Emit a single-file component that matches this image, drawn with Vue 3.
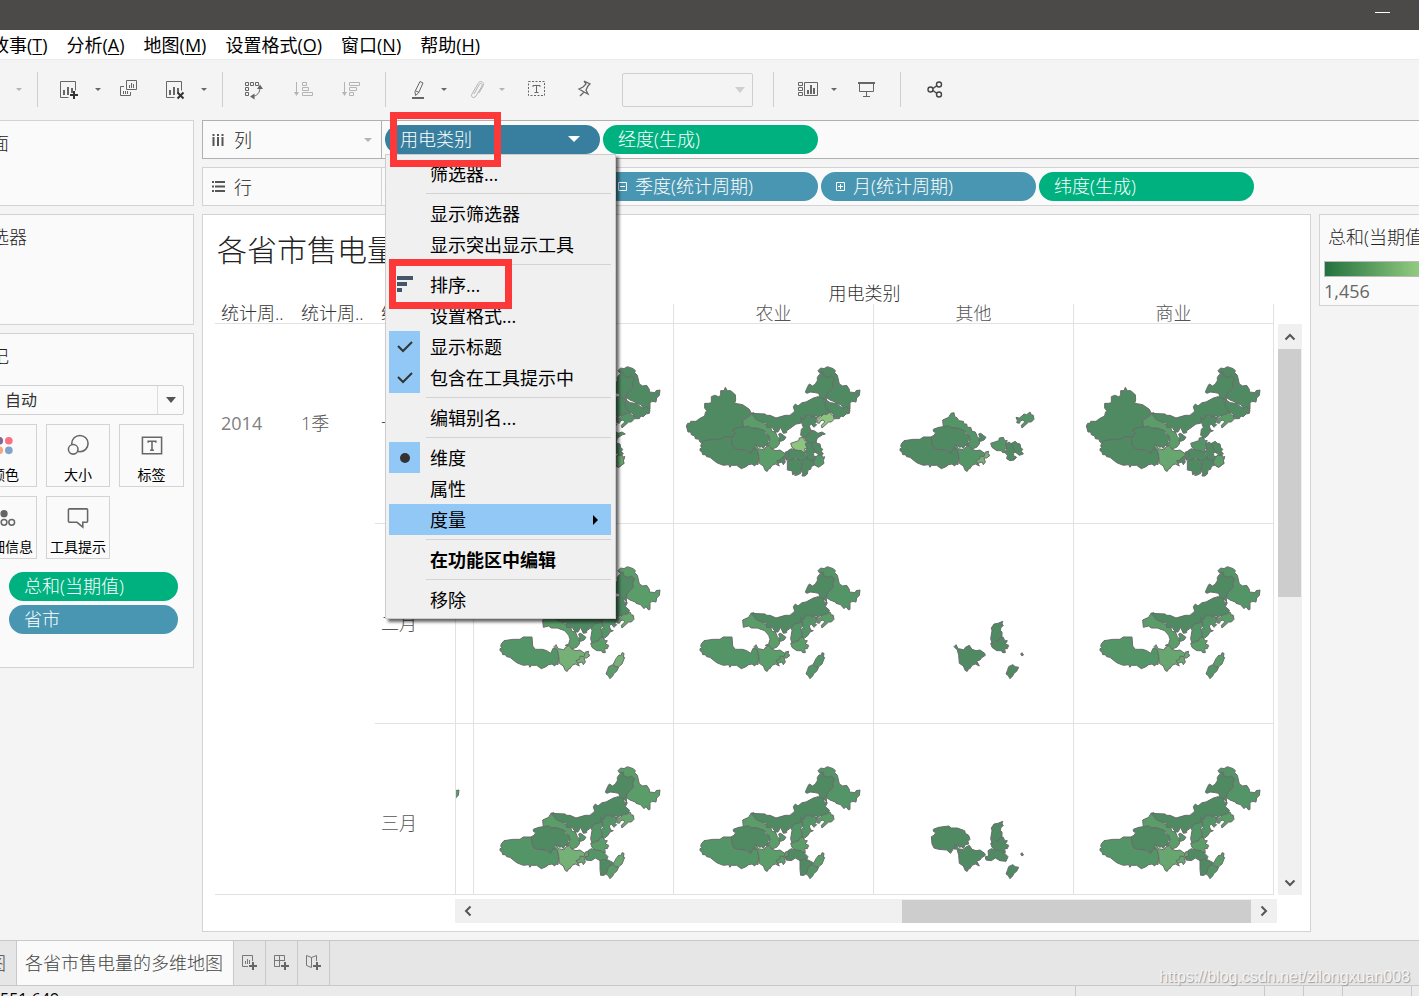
<script setup>
const menus = [
  ['故事', 'T'], ['分析', 'A'], ['地图', 'M'], ['设置格式', 'O'], ['窗口', 'N'], ['帮助', 'H'],
]

const chartBox = '<path d="M10.5 18.5H2.5V2.5h15v9"/><path class="f" d="M5 11h2v5H5zM9 8h2v8H9zM13 9h2v5h-2z"/>'
const icons = {
  add: chartBox + '<path class="k" d="M15 12h2v3h3v2h-3v3h-2v-3h-3v-2h3z"/>',
  dup: '<path d="M8.5 1.5h10v9h-10zM6 7.500H2.500v9h10V13"/><path d="M11.500 6v3M13.500 4v5M15.500 5v4M5.500 12v3M7.500 12v3M9.500 12v3"/>',
  clear: chartBox + '<path class="x" d="M13.500 13.500l6 6M19.500 13.500l-6 6"/>',
  swap: '<path d="M2.500 3.500h3v3h-3zM7.500 3.500h3v3h-3zM12.500 3.500h3v3h-3zM2.500 8.500h3v3h-3zM2.500 13.500h3v3h-3z"/><path d="M17 8c0 6-3 9-8 9.500" /><path class="f" d="M17 5.500l3 4.500h-6zM7 17.500l4.500-3v6z"/>',
  asc: '<path d="M3.500 3v13M9.500 3.500h4v3h-4zM9.500 8.500h6v3h-6zM9.500 13.500h10v3h-10z"/><path class="f" d="M1 13h5l-2.500 4z"/>',
  desc: '<path d="M3.500 3v13M8.500 3.500h10v3h-10zM8.500 8.500h7v3h-7zM8.500 13.500h4v3h-4z"/><path class="f" d="M1 13h5l-2.500 4z"/>',
  pen: '<path d="M12 2.500l3 1.500-4.500 10-3 2.500-.500-4zM8 12l3 1.500"/><path class="f" d="M4 18h12v2H4z"/>',
  clip: '<path d="M8 15l5-9c1-2.500 4-1.500 3 1l-6 10c-2 3-6 1-4-2l6-10.500c2.500-4 7-1 5 2.500l-4 7"/>',
  text: '<path stroke-dasharray="2 1.500" d="M2.500 2.500h16v14h-16z"/><path d="M7 8V6.500h7V8M10.500 7v6.500M8.500 13.500h4"/>',
  pin: '<path d="M10 2l6 3-2 2-2 4 2 4-4-2-4 4M10 13l-5-3 4-2 3-3-2-3" stroke-width="1.300"/>',
  show: '<path d="M.500 3.500h4v3h-4zM.500 8.500h4v3h-4zM.500 13.500h4v3h-4zM6.500 3.500h13v13h-13z"/><path class="f" d="M9 11h2v4H9zM12 6h2v9h-2zM15 9h2v6h-2z"/>',
  present: '<path class="f" d="M2 3h17v2H2z"/><path d="M3.500 5v7.500h14V5M10.500 12.500v5M7 17.500h7"/>',
  share: '<g stroke-width="1.400"><circle cx="5.500" cy="10.500" r="2.500"/><circle cx="14" cy="5.500" r="2.500"/><circle cx="14" cy="15.500" r="2.500"/><path d="M8 9.500l4-3M8 11.500l4 3"/></g>',
}

const tools = [
  { t: 'arrow', g: 10, dim: true, l: '更多' }, { t: 'sep', g: 10 },
  { t: 'icon', i: 'add', g: 18, l: '新建工作表' }, { t: 'arrow', g: 10, l: '新建选项' },
  { t: 'icon', i: 'dup', g: 10, l: '复制' }, { t: 'icon', i: 'clear', g: 22, l: '清除' }, { t: 'arrow', g: 10, l: '清除选项' },
  { t: 'sep', g: 10 }, { t: 'icon', i: 'swap', g: 18, l: '交换行和列' },
  { t: 'icon', i: 'asc', g: 26, dim: true, l: '升序' }, { t: 'icon', i: 'desc', g: 24, dim: true, l: '降序' },
  { t: 'sep', g: 22 }, { t: 'icon', i: 'pen', g: 20, l: '突出显示' }, { t: 'arrow', g: 6, l: '突出显示选项' },
  { t: 'icon', i: 'clip', g: 12, dim: true, l: '分组' }, { t: 'arrow', g: 6, dim: true, l: '分组选项' },
  { t: 'icon', i: 'text', g: 14, l: '标签' }, { t: 'icon', i: 'pin', g: 24, l: '固定' },
  { t: 'select', g: 26, l: '适合' }, { t: 'sep', g: 20 },
  { t: 'icon', i: 'show', g: 22, l: '卡' }, { t: 'arrow', g: 6, l: '卡选项' },
  { t: 'icon', i: 'present', g: 12, l: '演示模式' }, { t: 'sep', g: 22 },
  { t: 'icon', i: 'share', g: 22, dark: true, l: '共享' },
]

const ctx = [
  { n: '筛选器...' }, null, { n: '显示筛选器' }, { n: '显示突出显示工具' }, null,
  { n: '排序...', icon: 'sort', boxed: true }, { n: '设置格式...' },
  { n: '显示标题', icon: 'check' }, { n: '包含在工具提示中', icon: 'check' }, null,
  { n: '编辑别名...' }, null, { n: '维度', icon: 'dot' }, { n: '属性' },
  { n: '度量', hot: true }, null, { n: '在功能区中编辑', bold: true }, null, { n: '移除' },
]

const P = {
  xj: '49,258 53,250 60,250 62,244 78,244 88,236 104,228 106,218 110,212 104,204 104,190 116,190 124,188 124,170 134,166 146,170 152,166 152,152 162,152 166,142 172,152 182,152 196,164 197,180 194,190 218,194 238,208 243,218 238,228 224,236 222,260 190,268 190,274 197,278 192,288 184,290 160,293 145,300 130,298 102,304 96,310 88,304 88,298 76,296 74,288 64,284 62,276 54,276',
  xz: '94,312 102,302 130,298 150,298 160,291 186,291 188,318 196,328 218,328 230,332 242,340 250,324 262,328 266,350 264,374 258,372 254,378 246,372 236,374 228,380 214,386 200,376 184,376 180,382 176,374 160,376 140,368 120,352 110,350 106,344 98,344 96,336 90,332 90,326 96,324 92,318',
  qh: '190,268 206,262 236,258 244,264 262,264 284,272 286,280 296,286 300,298 294,304 296,312 286,314 280,326 276,320 268,322 256,314 256,328 250,326 242,340 230,330 206,328 192,324 186,312 184,290 192,286 197,278 190,274',
  gs: '218,240 236,232 243,220 252,218 254,230 262,234 266,242 280,244 282,252 290,252 292,262 302,262 306,274 316,276 322,290 330,298 328,312 320,322 308,326 306,332 298,318 286,316 296,312 300,298 296,286 284,272 262,264 244,264 236,258 220,262',
  nm: '243,220 286,222 290,226 300,226 318,234 346,226 360,226 374,214 370,200 376,192 384,198 396,188 408,186 430,174 444,170 462,174 462,186 472,188 466,200 478,210 476,220 444,230 434,226 426,232 424,224 416,228 408,226 402,240 396,236 392,250 378,252 362,264 350,272 350,278 340,280 332,262 324,276 316,276 306,262 290,262 290,250 276,246 260,240 252,230',
  nme: '406,156 414,138 418,132 428,138 436,132 442,122 442,112 448,104 456,94 464,108 474,112 484,108 492,114 494,122 488,132 490,142 474,158 468,170 470,186 462,176 450,172 446,160 436,158 422,156 410,160',
  hlj: '444,92 452,84 462,86 472,80 490,86 496,92 494,98 502,106 508,132 518,138 530,136 538,148 538,156 556,158 558,152 570,150 568,166 560,174 558,186 546,184 540,190 540,208 536,210 528,200 522,206 512,194 498,190 496,186 480,180 468,172 474,158 490,142 488,130 494,116 484,108 474,112 462,108 460,96 448,98',
  jl: '464,178 472,182 480,188 498,190 512,200 522,206 528,200 540,210 538,220 528,222 520,230 512,228 508,236 494,236 490,222 476,214 466,200',
  ln: '438,232 448,234 456,228 462,222 470,224 480,216 484,224 490,226 492,238 484,246 476,246 456,264 454,256 464,246 460,240 452,242 448,250 440,248 442,242',
  hb: '392,232 400,240 408,226 416,230 424,226 426,232 434,226 440,242 434,252 440,254 432,262 424,252 418,258 422,270 430,272 420,276 414,286 404,294 392,286 394,268 400,262 396,252',
  sd: '404,294 414,284 422,276 432,272 444,280 456,276 466,282 458,284 442,294 438,306 428,312 410,306',
  sx: '362,296 366,272 364,264 372,252 384,250 398,244 396,252 400,256 392,264 392,272 396,276 396,296 388,302 374,304 366,310',
  hn: '362,310 374,306 386,302 388,294 400,292 404,302 412,302 406,312 416,316 412,326 404,326 406,338 398,338 394,332 380,332 366,322',
  hbei: '346,350 356,348 354,332 364,326 376,330 392,332 402,338 414,350 408,364 390,362 376,354 364,362 348,360',
  ah: '406,312 418,306 424,312 430,312 428,322 438,336 430,340 430,346 440,352 432,360 420,362 410,356 412,346 404,336 412,326',
  js: '424,310 436,304 442,310 450,312 452,322 458,328 454,334 460,342 448,346 438,338 428,322',
  zj: '434,356 442,346 456,346 460,352 464,350 460,362 462,370 446,382 432,374 430,366',
  jx: '396,362 412,356 424,362 434,360 430,370 434,374 424,380 422,388 414,390 412,402 404,408 396,408 398,400 392,388',
  hun: '352,364 370,356 390,360 396,370 392,400 380,406 374,406 376,400 368,404 366,392 352,390',
  cq: '318,362 330,356 330,348 342,350 346,336 356,334 354,342 360,346 350,354 342,354 346,366 340,374 336,366 324,370',
  sc: '252,320 258,314 264,326 276,328 282,330 286,322 298,316 306,328 318,332 330,330 344,340 346,346 334,354 330,360 320,362 324,370 328,378 316,372 306,376 300,386 296,386 292,394 286,392 280,378 268,370 266,346 262,330',
  nx: '326,282 332,280 340,286 348,292 342,300 332,304 326,302 330,294',
  fj: '430,372 438,356 446,346 454,346 456,338 462,340 460,352 464,352 456,372 444,382 434,378',
  gd: '408,402 412,392 416,380 428,374 436,380 446,382 440,394 432,400 428,408 420,416 414,406',
  gx: '390,362 400,358 414,360 430,368 424,378 414,384 410,400 402,406 392,406 390,388',
  tip: '452,342 456,338 458,342 461,344 456,348',
}
const C = ['#4f8a63', '#549567', '#5a9d69', '#67a66f', '#75b076', '#8cc480']
const full = 'xj0 xz0 qh0 gs2 nm0 nme0 hlj0 jl0 '
const south = 'hb0 hn1 hbei0 ah0 js0 zj1 jx0 hun0 cq0 nx0 '
const north = 'xz1 gs2 nm0 nme0 hb1 nx1 sx1 hn2 '
const parse = (s) => s.trim().split(/\s+/).map((k) => {
  const [, id, c] = k.match(/^([a-z]+)(\d)$/)
  return { pts: P[id], fill: C[c] }
})
const rows = [
  { y: '2014', q: '1季', m: '一月', cells: [
    full + south + 'sd1 ln1 sc3 zj3', full + south + 'sd1 ln1 sc3 zj3',
    full + 'hb0 sd0 ln5 hn5 hbei0 ah0 js0 zj1 jx0 hun0 cq0 nx0 sc2',
    'xz0 gs1 qh0 sc1 cq4 nx0 ln1 hn1 ah0 js0',
    full + south + 'ln2 sc3 zj2',
  ] },
  { y: '', q: '', m: '二月', cells: [
    north + 'hlj2 ln3 sc4 cq4 fj4 gd2', north + 'hlj2 ln3 sc4 cq4 fj4 gd2',
    north + 'hlj1 ln2 sc2 cq2 fj1 gd1', 'sc0 sx0 hn0 gd0 tip0',
    north + 'hlj1 ln2 sc3 cq3 fj2 gd1',
  ] },
  { y: '', q: '', m: '三月', cells: [
    north + 'qh1 hlj2 ln3 sc4 cq4 hbei1 gx0 fj3 gd2', north + 'qh0 hlj2 ln3 sc4 cq3 hbei1 gx0 fj3 gd2',
    north + 'qh0 hlj1 ln2 sc2 cq2 hbei0 gx0 fj2 gd1', 'qh0 sc0 sx0 hn0 hbei0 gd0 tip0',
    north + 'qh0 hlj1 ln2 sc3 cq3 hbei0 gx0 fj2 gd1',
  ] },
].map((r) => ({ ...r, cells: r.cells.map(parse) }))
</script>

<template>
  <div class="app">
    <header class="titlebar"><button class="min" aria-label="最小化"></button></header>
    <nav class="menubar">
      <a v-for="m in menus" :key="m[1]" href="#">{{ m[0] }}(<u>{{ m[1] }}</u>)</a>
    </nav>
    <div class="toolbar">
      <template v-for="(t, k) in tools" :key="k">
        <span v-if="t.t === 'sep'" class="sep" :class="'g' + t.g"></span>
        <div v-else-if="t.t === 'select'" class="fit" :class="'g' + t.g">
          <select :aria-label="t.l" disabled><option></option></select>
        </div>
        <button v-else-if="t.t === 'arrow'" class="arrow" :class="['g' + t.g, { dim: t.dim }]" :aria-label="t.l"></button>
        <button v-else class="tool" :class="['g' + t.g, { dim: t.dim, dark: t.dark }]" :aria-label="t.l">
          <svg viewBox="0 0 21 21" v-html="icons[t.i]"></svg>
        </button>
      </template>
    </div>

    <main class="body">
      <aside class="side">
        <section class="card pages"><h2>页面</h2></section>
        <section class="card filters"><h2>筛选器</h2></section>
        <section class="card marks">
          <h2>标记</h2>
          <div class="mark-type"><select aria-label="标记类型"><option>自动</option></select></div>
          <div class="mark-grid">
            <button><svg viewBox="0 0 24 24"><circle cx="6" cy="7" r="4" fill="#7d6a92" /><circle cx="16" cy="7" r="4" fill="#fa7183" /><circle cx="6" cy="17" r="4" fill="#f5a878" /><circle cx="16" cy="17" r="4" fill="#7fa3cc" /></svg>颜色</button>
            <button><svg viewBox="0 0 24 24" class="ln"><circle cx="14" cy="10" r="8.500" /><circle cx="7" cy="16" r="5" fill="#fafafa" /></svg>大小</button>
            <button><svg viewBox="0 0 24 24" class="ln"><path d="M2 3.500h20v17H2z" /><path d="M8 9V7.500h8V9M12 8v9M10 17h4" /></svg>标签</button>
            <button><svg viewBox="0 0 24 24" class="ln"><circle cx="11" cy="8" r="3" fill="#666" /><circle cx="3" cy="17" r="3" /><circle cx="11" cy="17" r="3" /><circle cx="19" cy="17" r="3" /></svg>详细信息</button>
            <button><svg viewBox="0 0 24 24" class="ln"><path d="M3 3h18q1 0 1 1v12q0 1-1 1h-4v5l-6-5H3q-1 0-1-1V4q0-1 1-1z" /></svg>工具提示</button>
          </div>
          <div class="mark-pills">
            <button class="pill green">总和(当期值)</button>
            <button class="pill blue">省市</button>
          </div>
        </section>
      </aside>

      <div class="work">
        <div class="shelf on">
          <div class="shelf-name">
            <svg viewBox="0 0 14 14"><path d="M2.500 4v9M7 4v9M11.500 4v9M2.500 1v2M7 1v2M11.500 1v2" /></svg>列
            <button class="arrow dim" aria-label="列选项"></button>
          </div>
          <div class="pills">
            <div class="anchor">
              <button class="pill blue sel">用电类别<i class="tri"></i></button>
              <div class="ctx" role="menu">
                <template v-for="(c, k) in ctx" :key="k">
                  <hr v-if="!c">
                  <button v-else class="mi" role="menuitem" :class="{ hot: c.hot, bold: c.bold }">
                    <span class="ic" :class="c.icon">
                      <svg v-if="c.icon === 'check'" viewBox="0 0 31 31"><path d="M9 15l5 5 9-9" fill="none" stroke="#333" stroke-width="2" /></svg>
                      <svg v-if="c.icon === 'dot'" viewBox="0 0 31 31"><circle cx="16" cy="16" r="5" fill="#333" /></svg>
                      <svg v-if="c.icon === 'sort'" viewBox="0 0 31 31"><path d="M8 7h16v4H8zM8 13h10v4H8zM8 19h5v4H8z" fill="#475569" /></svg>
                    </span>{{ c.n }}
                    <i v-if="c.hot" class="more"></i>
                    <span v-if="c.boxed" class="mark-box item-box"></span>
                  </button>
                </template>
              </div>
              <span class="mark-box pill-box"></span>
            </div>
            <button class="pill green">经度(生成)</button>
          </div>
        </div>
        <div class="shelf">
          <div class="shelf-name">
            <svg viewBox="0 0 14 14"><path d="M4 2h10M4 6.500h10M4 11h10M1 2h2M1 6.500h2M1 11h2" /></svg>行
          </div>
          <div class="pills">
            <button class="pill blue exp"><svg viewBox="0 0 9 9"><path d="M.500.500h8v8h-8zM2 4.500h5" /></svg>年(统计周期)</button>
            <button class="pill blue exp"><svg viewBox="0 0 9 9"><path d="M.500.500h8v8h-8zM2 4.500h5" /></svg>季度(统计周期)</button>
            <button class="pill blue exp"><svg viewBox="0 0 9 9"><path d="M.500.500h8v8h-8zM2 4.500h5M4.500 2v5" /></svg>月(统计周期)</button>
            <button class="pill green">纬度(生成)</button>
          </div>
        </div>

        <div class="lower">
          <section class="viz">
            <h1>各省市售电量的多维地图</h1>
            <div class="grid-area">
              <div class="tbl">
                <table>
                  <colgroup><col class="c80"><col class="c80"><col class="c80"><col class="c18"><col><col><col><col class="c201"></colgroup>
                  <thead>
                    <tr class="h1r"><th colspan="3"></th><th colspan="5" class="dimname">用电类别</th></tr>
                    <tr class="h2r"><th class="rh">统计周..</th><th class="rh">统计周..</th><th class="rh">统计周..</th><th class="vb"></th><th class="vb">居民</th><th class="vb">农业</th><th class="vb">其他</th><th class="vb last">商业</th></tr>
                  </thead>
                  <tbody>
                    <tr v-for="r in rows" :key="r.m">
                      <th class="rh nb num">{{ r.y }}</th><th class="rh nb">{{ r.q }}</th><th class="rh">{{ r.m }}</th>
                      <td v-for="(c, k) in r.cells" :key="k" :class="{ strip: k === 0, last: k === 4 }">
                        <div class="clip">
                          <svg viewBox="12 -48 600 600" role="img" aria-label="地图"><polygon v-for="(p, n) in c" :key="n" :points="p.pts" :fill="p.fill" /></svg>
                        </div>
                      </td>
                    </tr>
                  </tbody>
                </table>
              </div>
              <div class="vscroll">
                <button aria-label="向上"><svg viewBox="0 0 12 12"><path d="M1.500 8.500L6 4l4.500 4.500" /></svg></button>
                <div class="vthumb"></div>
                <button aria-label="向下"><svg viewBox="0 0 12 12"><path d="M1.500 3.500L6 8l4.500-4.500" /></svg></button>
              </div>
            </div>
            <div class="hscroll">
              <button aria-label="向左"><svg viewBox="0 0 12 12"><path d="M8.500 1.500L4 6l4.500 4.500" /></svg></button>
              <div class="hthumb"></div>
              <button aria-label="向右"><svg viewBox="0 0 12 12"><path d="M3.500 1.500L8 6l-4.500 4.500" /></svg></button>
            </div>
          </section>
          <section class="legend"><h2>总和(当期值)</h2><div class="ramp"></div><span>1,456</span></section>
        </div>
      </div>
    </main>

    <nav class="tabs">
      <a href="#" class="prev">地图</a>
      <a href="#" class="cur">各省市售电量的多维地图</a>
      <button aria-label="新建工作表"><svg viewBox="0 0 17 17"><path d="M7 11.500H1.500v-11h10V6M4.500 6v3M6.500 4v5M8.500 5v4" /><path class="f" d="M11 7h2v3h3v2h-3v3h-2v-3H8v-2h3z" /></svg></button>
      <button aria-label="新建仪表板"><svg viewBox="0 0 17 17"><path d="M7 11.500H1.500v-11h10V6M6.500 1v10M2 5.500h9" /><path class="f" d="M11 7h2v3h3v2h-3v3h-2v-3H8v-2h3z" /></svg></button>
      <button aria-label="新建故事"><svg viewBox="0 0 17 17"><path d="M6.500 12.500l-5-2v-10l5 2zM6.500 2.500l5-2V6" /><path class="f" d="M11 7h2v3h3v2h-3v3h-2v-3H8v-2h3z" /></svg></button>
    </nav>
    <footer class="status"><b>551,649</b><span class="s1"></span><span class="s2"></span><span class="s2"></span><span class="s3"></span><span class="s4"></span></footer>
    <div class="watermark">https://blog.csdn.net/zilongxuan008</div>
  </div>
</template>

<style>
html, body { margin: 0; background: #f4f4f4; overflow: hidden; }
.tool svg .f, .tabs svg .f { fill: currentColor; stroke: none; }
.tool svg .k { fill: #333; stroke: none; }
.tool svg .x { stroke: #333; stroke-width: 2; }
</style>

<style scoped>
.app { position: relative; display: flex; flex-direction: column; height: 100vh; overflow: hidden; background: #f4f4f4; color: #222; font-family: "Open Sans", "Noto Sans CJK SC", sans-serif; font-size: 18px; line-height: 26px; font-weight: 300; }
.app *, .app *::before, .app *::after { box-sizing: border-box; }
button { font: inherit; color: inherit; background: none; border: 0; padding: 0; margin: 0; text-align: left; }
h1, h2 { margin: 0; font-weight: 300; font-size: 18px; }
a { color: inherit; text-decoration: none; }
svg { display: block; }

.titlebar { flex: none; height: 30px; background: #4b4a48; display: flex; justify-content: flex-end; padding: 12px 29px 0 0; }
.min { width: 15px; height: 1px; background: #fff; }
.menubar { flex: none; height: 29px; background: #fff; color: #000; display: flex; gap: 19px; margin-left: -9px; padding-top: 2px; white-space: nowrap; font-weight: 400; }
.menubar u { text-underline-offset: 2px; text-decoration-thickness: 1px; }
.toolbar { flex: none; height: 61px; border-top: 1px solid #ebebeb; display: flex; align-items: center; color: #666; padding: 0 0 1px 1px; }
.sep { width: 1px; height: 35px; background: #cfcfcf; }
.tool { width: 24px; height: 24px; padding: 1px 2px 2px; }
.tool svg { width: 21px; height: 21px; fill: none; stroke: currentColor; }
.dim { color: #b4b4b4; }
.dark { color: #444; }
.arrow { width: 16px; height: 16px; display: flex; align-items: center; justify-content: center; }
.arrow::after { content: ""; border: 3px solid transparent; border-top-color: currentColor; border-bottom: 0; }
.g6 { margin-left: 6px; } .g10 { margin-left: 10px; } .g12 { margin-left: 12px; } .g14 { margin-left: 14px; }
.g18 { margin-left: 18px; } .g20 { margin-left: 20px; } .g22 { margin-left: 22px; } .g24 { margin-left: 24px; } .g26 { margin-left: 26px; }
.fit, .mark-type { position: relative; }
.fit { width: 131px; height: 34px; }
select { width: 100%; height: 100%; appearance: none; background: transparent; border: 1px solid #cfcfcf; border-radius: 2px; font: inherit; color: #333; opacity: 1; }
.fit::after { content: ""; position: absolute; right: 8px; top: 14px; border: 5px solid transparent; border-top: 6px solid #cfcfcf; border-bottom: 0; }

.body { flex: 1; min-height: 0; display: flex; gap: 8px; margin-left: -36px; padding-bottom: 8px; }
.side { flex: none; width: 230px; display: flex; flex-direction: column; gap: 8px; }
.card { background: #fafafa; border: 1px solid #d3d3d3; padding: 9px 9px 0 8px; }
.pages { height: 86px; } .filters { height: 111px; } .marks { height: 335px; }
.mark-type { height: 30px; margin-top: 16px; }
.mark-type select { font-size: 16px; padding-left: 31px; font-weight: 400; }
.mark-type::before { content: ""; position: absolute; right: 26px; top: 1px; bottom: 1px; width: 1px; background: #dcdcdc; }
.mark-type::after { content: ""; position: absolute; right: 8px; top: 12px; border: 5px solid transparent; border-top: 6px solid #555; border-bottom: 0; }
.mark-grid { display: grid; grid-template-columns: 64px 64px 1fr; gap: 9px; margin-top: 9px; }
.mark-grid button { height: 63px; border: 1px solid #d3d3d3; display: flex; flex-direction: column; align-items: center; gap: 7px; padding-top: 9px; font-size: 14px; line-height: 22px; color: #000; white-space: nowrap; font-weight: 400; }
.mark-grid svg { width: 24px; height: 24px; }
.ln { fill: none; stroke: #666; stroke-width: 1.6; }
.mark-pills { display: flex; flex-direction: column; gap: 4px; margin: 13px 6px 0 36px; }
.pill { height: 29px; border-radius: 15px; color: #fff; padding: 0 15px 1px; display: flex; align-items: center; white-space: nowrap; }
.green { background: #00b180; } .blue { background: #4996b2; } .sel { background: #387e9e; }

.work { flex: 1; min-width: 0; display: flex; flex-direction: column; gap: 8px; }
.shelf { flex: none; height: 39px; display: flex; background: #fafafa; border: 1px solid #d3d3d3; border-right: 0; }
.shelf.on { border-color: #b0b0b0; }
.shelf-name { width: 179px; border-right: 1px solid #d3d3d3; display: flex; align-items: center; gap: 9px; padding-left: 8px; }
.on .shelf-name { border-color: #b0b0b0; }
.shelf-name svg { width: 14px; height: 14px; stroke: #555; stroke-width: 2; }
.shelf-name .arrow { margin-left: auto; margin-right: 5px; }
.shelf-name .arrow::after { border-width: 4px 4px 0; }
.pills { display: flex; align-items: center; gap: 3px; padding-left: 3px; }
.pills .pill { width: 215px; }
.exp { gap: 8px; }
.exp svg { flex: none; width: 9px; height: 9px; fill: none; stroke: #fff; }
.anchor { position: relative; z-index: 5; }
.tri { margin-left: auto; margin-right: 5px; border: 6px solid transparent; border-top-color: #fff; border-bottom: 0; }
.mark-box { position: absolute; border: 7px solid #fd3838; pointer-events: none; z-index: 2; }
.pill-box { left: 5px; top: -13px; width: 111px; height: 55px; }
.item-box { left: 0; top: -10px; width: 123px; height: 50px; }
.ctx { position: absolute; left: 0; top: 29px; width: 231px; background: #f0f0f0; border: 1px solid #ccc; box-shadow: 3px 3px 3px rgba(0, 0, 0, .6); padding: 3px 4px 3px 3px; color: #000; font-weight: 400; }
.mi { position: relative; display: flex; align-items: center; width: 100%; height: 31px; white-space: nowrap; }
.mi .ic { width: 31px; height: 31px; margin-right: 10px; }
.ic.check, .ic.dot { background: #91c8f6; }
.hot { background: #91c8f6; }
.bold { font-weight: 700; }
.more { margin-left: auto; margin-right: 13px; border: 5px solid transparent; border-left-color: #000; border-right: 0; }
.ctx hr { margin: 4px 0 4px 37px; border: 0; height: 1px; background: #d3d3d3; }

.lower { flex: 1; min-height: 0; display: flex; gap: 8px; align-items: flex-start; }
.viz { flex: 1; min-width: 0; align-self: stretch; background: #fff; border: 1px solid #d3d3d3; padding: 10px 8px 8px 12px; display: flex; flex-direction: column; }
.viz h1 { font-size: 30px; line-height: 50px; height: 58px; padding-left: 2px; }
.grid-area { flex: 1; min-height: 0; display: flex; gap: 4px; }
.tbl { flex: 1; min-width: 0; overflow: hidden; border-bottom: 1px solid #e2e2e2; }
table { width: 100%; table-layout: fixed; border-collapse: separate; border-spacing: 0; color: #555; }
.c80 { width: 80px; } .c18 { width: 18px; } .c201 { width: 201px; }
th, td { padding: 0; font-weight: 300; height: 200px; border-bottom: 1px solid #e2e2e2; }
.h1r th { height: 21px; line-height: 18px; padding-bottom: 2px; border: 0; }
.h2r th { height: 20px; line-height: 19px; white-space: nowrap; overflow: hidden; }
.dimname, .h2r .rh { color: #333; }
.rh { text-align: left; padding-left: 6px; }
tbody .rh { padding-bottom: 2px; }
.num { font-weight: 400; color: #808080; }
.nb { border-bottom-color: transparent; }
.vb, td { border-left: 1px solid #e2e2e2; }
.last { border-right: 1px solid #e2e2e2; }
.clip { height: 199px; overflow: hidden; display: flex; }
.strip .clip { justify-content: flex-end; }
.clip svg { flex: none; width: 200px; height: 200px; stroke: #6b6b6b; stroke-width: 3; stroke-linejoin: round; }
.vscroll { width: 24px; margin-top: 41px; background: #f0f0f0; display: flex; flex-direction: column; }
.vscroll button, .hscroll button { flex: none; height: 25px; display: flex; align-items: center; justify-content: center; }
.vscroll button { width: 23px; }
.hscroll button { width: 26px; }
.vscroll svg, .hscroll svg { width: 12px; height: 12px; fill: none; stroke: #555; stroke-width: 2; }
.vthumb { flex: none; height: 248px; width: 23px; background: #cdcdcd; margin-bottom: auto; }
.hscroll { flex: none; height: 24px; margin: 4px 25px 0 240px; background: #f0f0f0; display: flex; align-items: center; }
.hthumb { width: 349px; height: 23px; background: #cdcdcd; margin-left: auto; }
.legend { flex: none; width: 140px; margin-right: -40px; height: 92px; background: #fafafa; border: 1px solid #d3d3d3; padding: 9px 4px 0; }
.legend h2 { padding-left: 4px; white-space: nowrap; }
.ramp { height: 16px; margin-top: 11px; border: 1px solid #bbb; background: linear-gradient(90deg, #24713f, #92cc80 95px); }
.legend span { display: block; line-height: 28px; color: #666; font-weight: 400; }

.tabs { flex: none; height: 45px; display: flex; background: #e6e6e6; border-top: 1px solid #c8c8c8; color: #444; margin-left: -40px; }
.tabs a { display: flex; align-items: center; white-space: nowrap; border-right: 1px solid #c8c8c8; }
.prev { width: 57px; padding-left: 10px; }
.cur { background: #fafafa; padding: 0 10px 0 8px; }
.tabs button { width: 32px; border-right: 1px solid #c8c8c8; display: flex; align-items: center; justify-content: center; color: #666; }
.tabs svg { width: 17px; height: 17px; fill: none; stroke: #777; }
.status { flex: none; height: 11px; overflow: hidden; background: #ebebeb; border-top: 1px solid #c8c8c8; display: flex; color: #000; font-size: 16px; line-height: 26px; }
.status span { border-left: 1px solid #c8c8c8; }
.s1 { width: 189px; margin-left: auto; } .s2 { width: 39px; } .s3 { width: 69px; } .s4 { width: 8px; }
.watermark { position: absolute; right: 9px; bottom: 6px; font: 16px/26px "Liberation Sans", sans-serif; color: #f4f4f4; text-shadow: 1px 1px 1px #999; }
</style>
